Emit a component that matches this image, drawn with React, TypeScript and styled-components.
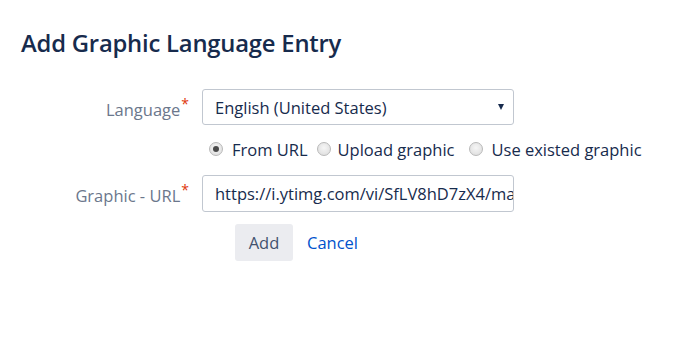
import styled, { createGlobalStyle } from "styled-components";

const GlobalStyle = createGlobalStyle`
  html, body {
    margin: 0;
    padding: 0;
    background: #ffffff;
  }
  body {
    font-family: "Open Sans", "Noto Sans", sans-serif;
    color: #172b4d;
  }
`;

/* ...... estilos ...... */

const Page = styled.div`
  width: 699px;
  height: 340px;
  padding: 28px 0 0 21px;
  box-sizing: border-box;
`;

const Title = styled.h2`
  margin: 0 0 31px;
  font-size: 23.8px;
  font-weight: 600;
  line-height: 30px;
  color: #172b4d;
  letter-spacing: -0.2px;
`;

const Form = styled.form`
  display: grid;
  grid-template-columns: 167px 312px;
  column-gap: 14px;
  align-items: center;
`;

const Label = styled.label`
  justify-self: end;
  margin-right: -1px;
  font-size: 16.5px;
  color: #6b778c;
  white-space: nowrap;
  span {
    color: #de350b;
    font-size: 14px;
    vertical-align: 7px;
    margin-left: 1px;
  }
`;

const Select = styled.div`
  height: 36px;
  border: 1px solid #c1c7d0;
  border-radius: 3px;
  box-sizing: border-box;
  display: flex;
  align-items: center;
  padding: 0 9px 0 12px;
  font-size: 16.5px;
  color: #172b4d;
  white-space: nowrap;
`;

const Arrow = styled.div`
  margin-left: auto;
  width: 0;
  height: 0;
  border-left: 3.5px solid transparent;
  border-right: 3.5px solid transparent;
  border-top: 6px solid #172b4d;
`;

const Input = styled.input`
  height: 37px;
  width: 100%;
  border: 1px solid #c1c7d0;
  border-radius: 3px;
  box-sizing: border-box;
  padding: 0 0 0 12px;
  font-family: inherit;
  font-size: 16.5px;
  color: #172b4d;
  background: #fff;
  outline: none;
`;

const Radios = styled.div`
  grid-column: 2 / span 2;
  display: flex;
  align-items: center;
  height: 50px;
  padding: 0 0 2px 7px;
  box-sizing: border-box;
  font-size: 16.5px;
  white-space: nowrap;
`;

const RadioItem = styled.label<{ $gap: number; $after: number }>`
  display: flex;
  align-items: center;
  gap: ${(p) => p.$gap}px;
  margin-right: ${(p) => p.$after}px;
  color: #172b4d;
`;

const Dot = styled.span<{ $checked?: boolean }>`
  width: 14px;
  height: 14px;
  border-radius: 50%;
  border: 1px solid #b9b9b9;
  box-sizing: border-box;
  background: radial-gradient(circle at 50% 40%, #f6f6f6, #dadada);
  display: flex;
  align-items: center;
  justify-content: center;
  &::after {
    content: "";
    display: ${(p) => (p.$checked ? "block" : "none")};
    width: 6px;
    height: 6px;
    border-radius: 50%;
    background: #4a4a4a;
  }
`;

const Actions = styled.div`
  grid-column: 2;
  display: flex;
  align-items: center;
  gap: 14px;
  margin: 12px 0 0 33px;
`;

const Button = styled.button`
  width: 58px;
  height: 37px;
  padding: 0;
  border: none;
  border-radius: 3px;
  background: #ebecf0;
  color: #42526e;
  font-family: inherit;
  font-size: 16.5px;
`;

const LinkBtn = styled.a`
  color: #0052cc;
  font-size: 16.5px;
  text-decoration: none;
`;

/* ...... fin estilos ...... */

export default function App() {
  return (
    <Page>
      <GlobalStyle />
      <Title>Add Graphic Language Entry</Title>
      <Form>
        <Label>
          Language<span>*</span>
        </Label>
        <Select>
          English (United States)
          <Arrow />
        </Select>

        <div />
        <Radios>
          <RadioItem $gap={9} $after={9}>
            <Dot $checked />
            From URL
          </RadioItem>
          <RadioItem $gap={7} $after={14}>
            <Dot />
            Upload graphic
          </RadioItem>
          <RadioItem $gap={9} $after={0}>
            <Dot />
            Use existed graphic
          </RadioItem>
        </Radios>

        <Label>
          Graphic - URL<span>*</span>
        </Label>
        <Input
          readOnly
          value="https://i.ytimg.com/vi/SfLV8hD7zX4/maxresdefault.jpg"
        />

        <Actions>
          <Button type="button">Add</Button>
          <LinkBtn href="#">Cancel</LinkBtn>
        </Actions>
      </Form>
    </Page>
  );
}
